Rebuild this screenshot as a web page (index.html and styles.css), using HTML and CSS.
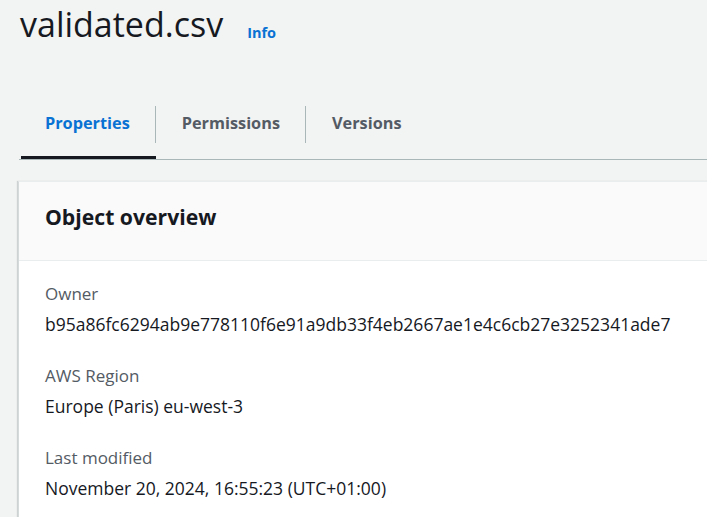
FILE: index.html
```html
<!DOCTYPE html>
<html>
<head>
<meta charset="utf-8">
<link rel="stylesheet" href="styles.css">
</head>
<body>
<div class="page">
  <header class="head">
    <h1 class="title">validated.csv</h1>
    <a class="info" href="#">Info</a>
  </header>
  <nav class="tabs">
    <div class="tab active"><span>Properties</span></div>
    <div class="tab"><span>Permissions</span></div>
    <div class="tab last"><span>Versions</span></div>
  </nav>
  <section class="card">
    <div class="card-head"><h2>Object overview</h2></div>
    <div class="card-body">
      <div class="field">
        <div class="label">Owner</div>
        <div class="value">b95a86fc6294ab9e778110f6e91a9db33f4eb2667ae1e4c6cb27e3252341ade7</div>
      </div>
      <div class="field">
        <div class="label">AWS Region</div>
        <div class="value">Europe (Paris) eu-west-3</div>
      </div>
      <div class="field">
        <div class="label">Last modified</div>
        <div class="value">November 20, 2024, 16:55:23 (UTC+01:00)</div>
      </div>
    </div>
  </section>
</div>
</body>
</html>
```
FILE: styles.css
```css
html, body {
  margin: 0;
  padding: 0;
  background: #f2f3f3;
  font-family: "Open Sans", "Noto Sans", sans-serif;
  color: #16191f;
  overflow: hidden;
}
.page {
  width: 707px;
  height: 517px;
  overflow: hidden;
}
.head {
  display: flex;
  align-items: flex-start;
  padding-left: 20px;
  height: 106px;
  box-sizing: border-box;
}
.title {
  margin: 2px 0 0 0;
  font-size: 34px;
  font-weight: 400;
  line-height: 44px;
  color: #16191f;
}
.info {
  margin: 23px 0 0 24px;
  font-size: 14.5px;
  line-height: 20px;
  font-weight: 700;
  color: #0972d3;
  text-decoration: none;
}
.tabs {
  display: flex;
  margin-left: 19px;
  border-bottom: 1px solid #aab7b8;
  width: 720px;
}
.tab {
  position: relative;
  height: 53px;
  display: flex;
  align-items: flex-start;
  font-size: 16.3px;
  font-weight: 700;
  color: #545b64;
}
.tab span {
  padding: 0 25px 3px 26px;
  border-right: 1px solid #aab7b8;
  line-height: 34px;
}
.tab.last span { border-right: none; }
.tab.active { color: #0972d3; }
.tab.active::after {
  content: "";
  position: absolute;
  left: 2px;
  right: 0;
  bottom: 0;
  height: 3px;
  background: #16191f;
}
.card {
  margin: 21px 0 0 18px;
  background: #fff;
  border-left: 1px solid #d5dbdb;
  border-top: 1px solid #eaeded;
  box-shadow: -1px 0 1px rgba(0,28,36,0.15);
  width: 720px;
  min-height: 400px;
}
.card-head {
  background: #fafafa;
  border-bottom: 1px solid #eaeded;
  height: 79px;
  box-sizing: border-box;
  padding: 20px 0 0 26px;
}
.card-head h2 {
  margin: 0;
  font-size: 21.2px;
  font-weight: 700;
  color: #16191f;
}
.card-body {
  padding: 18px 26px;
  display: flex;
  flex-direction: column;
  gap: 22px;
}
.label {
  font-size: 17px;
  color: #545b64;
  line-height: 30px;
}
.value {
  font-size: 17.5px;
  color: #16191f;
  line-height: 30px;
}
```
